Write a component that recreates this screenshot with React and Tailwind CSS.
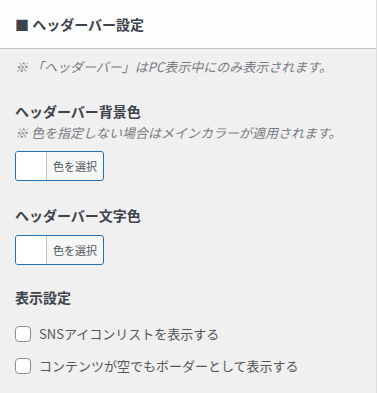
import React from "react";

const ColorButton = () => (
	<button
		type="button"
		className="flex h-[30px] w-[89px] items-stretch overflow-hidden rounded-[3px] border border-[#2271b1] bg-[#f6f7f7] p-0"
	>
		<span className="w-[31px] border-r border-[#c3c4c7] bg-white"></span>
		<span className="flex flex-1 items-center justify-center text-[11px] text-[#50575e]">色を選択</span>
	</button>
);

const Check = ({ label }) => (
	<label className="flex h-5 items-center gap-[8px] text-[13px] text-[#555]">
		<span className="h-4 w-4 rounded-[4px] border border-[#8c8f94] bg-white"></span>
		{label}
	</label>
);

export default function App() {
	return (
		<div
			className="h-[393px] w-[377px] border-r border-[#dcdcde] bg-[#f0f0f0]"
			style={{ fontFamily: '"Noto Sans CJK JP", "Noto Sans", sans-serif' }}
		>
			<div className="flex h-[49px] items-center border-b border-[#c3c4c7] bg-[#fdfdfd] px-[15px] pt-[1px]">
				<h2 className="text-[14px] font-bold text-[#3c434a]">■ ヘッダーバー設定</h2>
			</div>

			<div className="px-[15px] pt-[8px]">
				<p className="text-[13px] leading-5 italic text-[#787c82]">
					※ 「ヘッダーバー」はPC表示中にのみ表示されます。
				</p>

				<h3 className="mt-[24px] text-[14px] leading-5 font-bold text-[#3c434a]">ヘッダーバー背景色</h3>
				<p className="mt-[2px] text-[13px] leading-5 italic text-[#787c82]">
					※ 色を指定しない場合はメインカラーが適用されます。
				</p>
				<div className="mt-[8px]">
					<ColorButton />
				</div>

				<h3 className="mt-[24px] text-[14px] leading-5 font-bold text-[#3c434a]">ヘッダーバー文字色</h3>
				<div className="mt-[10px]">
					<ColorButton />
				</div>

				<h3 className="mt-[22px] text-[14px] leading-5 font-bold text-[#3c434a]">表示設定</h3>
				<div className="mt-[17px] flex flex-col gap-[12px]">
					<Check label="SNSアイコンリストを表示する" />
					<Check label="コンテンツが空でもボーダーとして表示する" />
				</div>
			</div>
		</div>
	);
}
